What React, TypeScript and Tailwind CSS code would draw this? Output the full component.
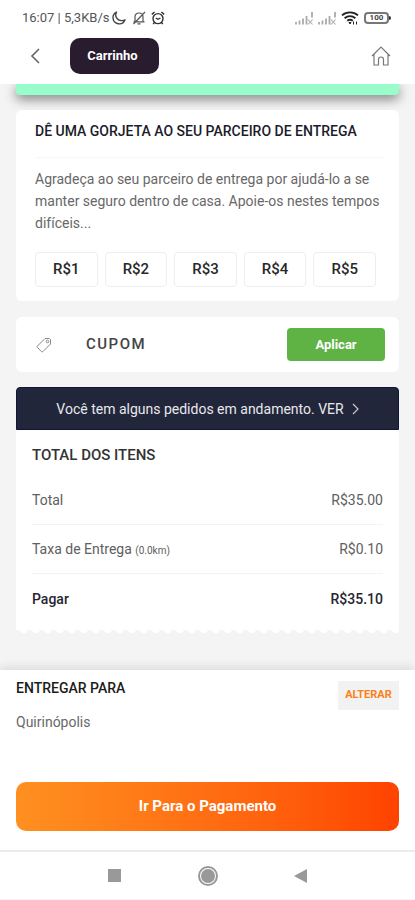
import { useState } from "react";

const TIPS = ["R$1", "R$2", "R$3", "R$4", "R$5"];

const TOTALS = [
  { label: "Total", value: "R$35.00" },
  { label: "Taxa de Entrega", note: "(0.0km)", value: "R$0.10" },
  { label: "Pagar", value: "R$35.10", strong: true },
];

function MoonIcon() {
  return (
    <svg viewBox="0 0 14 14" className="h-3.5 w-3.5" fill="none" stroke="#444" strokeWidth="1.4" strokeLinejoin="round">
      <path d="M4.5 1.2C2.3 2.2 1 4.2 1 6.6a6.2 6.2 0 0 0 12 2.2c-1.1.7-2.1.9-3.3.8A5.6 5.6 0 0 1 4.5 1.2Z" />
    </svg>
  );
}

function BellOffIcon() {
  return (
    <svg viewBox="0 0 14 14" className="h-3.5 w-3.5" fill="none" stroke="#555" strokeWidth="1.2">
      <path d="M3 10.5V6c0-2.4 1.5-4 4-4s4 1.6 4 4v4.5M1.5 10.8h11M5.5 12.8h3M13 1 1.5 13" />
    </svg>
  );
}

function AlarmIcon() {
  return (
    <svg viewBox="0 0 14 14" className="h-3.5 w-3.5" fill="none" stroke="#333" strokeWidth="1.4">
      <circle cx="7" cy="7.6" r="5" />
      <path d="M.8 3.4 3.6 1M13.2 3.4 10.4 1M4.8 7l2.2 1.3L9.4 7M3.4 11.5l-1.2 1.6M10.6 11.5l1.2 1.6" />
    </svg>
  );
}

function SignalIcon() {
  return (
    <svg viewBox="0 0 18 13" className="h-[13px] w-[18px]" fill="none" stroke="#aaa" strokeWidth="1.8">
      <path d="M1 12.5V10M4.5 12.5v-4M8 12.5v-6M11.500 12.500V4M17 5.500V0" />
      <path d="m13 7.500 4.500 5M17.500 7.500l-4.500 5" strokeWidth="1.1" />
    </svg>
  );
}

function WifiIcon() {
  return (
    <svg viewBox="0 0 18 14" className="h-3.5 w-[18px]" fill="none" stroke="#222" strokeWidth="1.9">
      <path d="M1 4.4c4.6-4 11.4-4 16 0M3.6 7.2c3.2-2.6 7.6-2.6 10.8 0M6.2 9.8c1.8-1.3 3.8-1.3 5.6 0" />
      <path d="M8 11.5h2l-1 1.5zM12.5 10.5v3M15.5 10.5v3" strokeWidth="1" />
    </svg>
  );
}

function StatusBar() {
  return (
    <div className="flex h-9 items-center justify-between pl-[22px] pr-6 text-[13px] text-[#555]">
      <div className="flex items-center gap-0.5">
        <span>16:07 | 5,3KB/s</span>
        <MoonIcon />
        <span className="ml-1 flex gap-[5px]">
          <BellOffIcon />
          <AlarmIcon />
        </span>
      </div>
      <div className="flex items-center gap-[5px]">
        <SignalIcon />
        <SignalIcon />
        <WifiIcon />
        <span className="flex items-center">
          <span className="flex h-3 w-[25px] items-center justify-center rounded-[4px] border-2 border-[#777] text-[8px] font-bold leading-none text-[#444]">
            100
          </span>
          <span className="h-1 w-0.5 rounded-r bg-[#333]" />
        </span>
      </div>
    </div>
  );
}

function Header() {
  return (
    <header className="relative bg-white">
      <StatusBar />
      <div className="flex h-12 items-start justify-between pl-[30px] pr-6">
        <div className="flex items-center gap-[30px] pt-0.5">
          <button type="button" aria-label="Voltar">
            <svg viewBox="0 0 10 16" className="h-4 w-2.5" fill="none" stroke="#666" strokeWidth="1.6">
              <path d="M9 1 2 8l7 7" />
            </svg>
          </button>
          <h1 className="flex h-9 w-[89px] items-center justify-center rounded-[10px] bg-[#281c2e] pr-1 text-[13px] font-bold text-white">
            Carrinho
          </h1>
        </div>
        <a href="#" aria-label="Início" className="pt-2.5">
          <svg viewBox="0 0 20 20" className="h-5 w-5" fill="none" stroke="#777" strokeWidth="1.2">
            <path d="M1 10 10 1l9 9M3 8.5V19h4.5v-5.5a2.5 2.5 0 0 1 5 0V19H17V8.5" />
          </svg>
        </a>
      </div>
    </header>
  );
}

function TipCard() {
  const [tip, setTip] = useState<string | null>(null);

  return (
    <section className="mt-[15px] rounded-md bg-white pb-3.5 pl-[19px] pr-3.5 pt-[11px]">
      <h2 className="whitespace-nowrap text-sm font-medium leading-5 text-[#1c1c2c]">
        DÊ UMA GORJETA AO SEU PARCEIRO DE ENTREGA
      </h2>
      <p className="mt-4 border-t border-[#f7f7f7] pt-2.5 text-sm leading-[22px] text-[#686868]">
        Agradeça ao seu parceiro de entrega por ajudá-lo a se manter seguro dentro de casa. Apoie-os nestes tempos
        difíceis...
      </p>
      <div className="mr-[9px] mt-[18px] grid grid-cols-5 gap-[7px]">
        {TIPS.map((value) => (
          <button
            key={value}
            type="button"
            aria-pressed={tip === value}
            onClick={() => setTip(value)}
            className="h-[35px] rounded border border-[#eee] text-[15px] font-medium text-[#282828]"
          >
            {value}
          </button>
        ))}
      </div>
    </section>
  );
}

function CouponCard() {
  return (
    <form
      onSubmit={(e) => e.preventDefault()}
      className="mt-4 flex h-[55px] items-center rounded-md bg-white pl-5 pr-3.5"
    >
      <svg viewBox="0 0 16 16" className="h-4 w-4 shrink-0" fill="none" stroke="#888" strokeWidth="1">
        <path d="M9 1.500h4.500l1 1V7L7 14.500q-.8.8-1.600 0L1.500 10.600q-.8-.8 0-1.600Z" strokeLinejoin="round" />
        <circle cx="11.500" cy="4.500" r="1.300" />
      </svg>
      <input
        type="text"
        aria-label="Cupom"
        placeholder="CUPOM"
        className="ml-[34px] min-w-0 flex-1 text-[15px] font-medium tracking-widest placeholder:text-[#444] focus:outline-none"
      />
      <button type="submit" className="h-[33px] w-[98px] rounded bg-[#5eb344] text-[13px] font-bold text-white">
        Aplicar
      </button>
    </form>
  );
}

function TotalsCard() {
  return (
    <section className="mt-[15px]">
      <a
        href="#"
        className="flex h-[43px] items-center justify-center gap-2 rounded-t border border-[#10153a] bg-[#22263b] text-sm text-[#e8e8ec]"
      >
        Você tem alguns pedidos em andamento. VER
        <svg viewBox="0 0 7 12" className="h-3 w-[7px]" fill="none" stroke="#c8c8d0" strokeWidth="1.2">
          <path d="m1 1 5 5-5 5" />
        </svg>
      </a>
      <div className="bg-white px-4 pb-[7px] pt-[15px]">
        <h2 className="text-[15px] font-medium leading-5 text-[#333]">TOTAL DOS ITENS</h2>
        <dl className="mt-[11px] divide-y divide-[#f3f3f3] text-sm">
          {TOTALS.map(({ label, note, value, strong }) => (
            <div
              key={label}
              className={
                strong
                  ? "flex h-[49px] items-center justify-between font-medium text-[#252530]"
                  : "flex h-[49px] items-center justify-between text-[#606060]"
              }
            >
              <dt>
                {label} {note && <span className="text-[10px]">{note}</span>}
              </dt>
              <dd>{value}</dd>
            </div>
          ))}
        </dl>
      </div>
      <svg className="block h-1 w-full" aria-hidden="true">
        <pattern id="receipt-edge" width="12" height="4" patternUnits="userSpaceOnUse">
          <path d="M0 0h12L10 3H7Q5 3 3 0Z" fill="#fff" />
        </pattern>
        <rect width="100%" height="4" fill="url(#receipt-edge)" />
      </svg>
    </section>
  );
}

function Checkout() {
  return (
    <footer className="relative bg-white px-4 pb-[19px] pt-2 shadow-[0_-2px_10px_rgba(0,0,0,0.12)]">
      <div className="flex items-start justify-between">
        <div>
          <h2 className="text-sm font-medium leading-5 text-[#1c1c1c]">ENTREGAR PARA</h2>
          <p className="mt-3.5 text-sm leading-5 text-[#686868]">Quirinópolis</p>
        </div>
        <button type="button" className="mt-[3px] h-[29px] w-[61px] bg-[#f2f2f2] text-[11px] font-bold text-[#fc8019]">
          ALTERAR
        </button>
      </div>
      <button
        type="button"
        className="mt-[50px] h-[49px] w-full rounded-[10px] bg-linear-to-r from-[#ff9020] to-[#ff4200] text-[15px] font-bold text-white"
      >
        Ir Para o Pagamento
      </button>
    </footer>
  );
}

function AndroidNav() {
  return (
    <nav className="relative grid h-[49px] grid-cols-[1fr_auto_1fr] items-center border-t-2 border-[#ebebeb] bg-white">
      <button type="button" aria-label="Recentes" className="mr-[77px] h-[13px] w-[13px] justify-self-end bg-[#999]" />
      <button type="button" aria-label="Tela inicial" className="flex h-5 w-5 items-center justify-center rounded-full border-2 border-[#999]">
        <span className="h-3.5 w-3.5 rounded-full bg-[#999]" />
      </button>
      <button type="button" aria-label="Voltar" className="ml-[76px] justify-self-start">
        <svg viewBox="0 0 13 14" className="h-3.5 w-[13px]" fill="#999">
          <path d="M13 0v14L0 7Z" />
        </svg>
      </button>
    </nav>
  );
}

export default function App() {
  return (
    <div className="flex min-h-screen flex-col bg-[#f4f4f4] font-[Roboto,sans-serif]">
      <Header />
      <main className="px-4 pb-9">
        <div className="h-[11px] rounded-b bg-[#98fdcb] shadow-[0_4px_12px_rgba(0,0,0,0.5)]" />
        <TipCard />
        <CouponCard />
        <TotalsCard />
      </main>
      <Checkout />
      <AndroidNav />
    </div>
  );
}
